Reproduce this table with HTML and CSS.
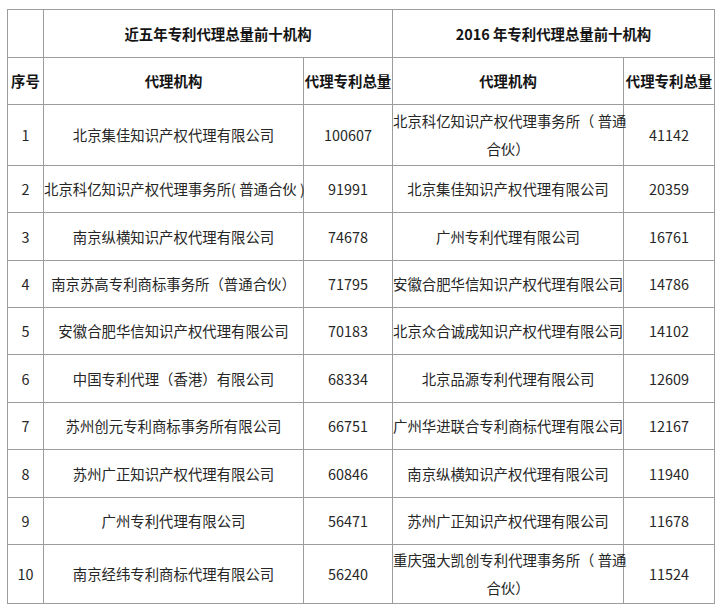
FILE: index.html
```html
<!DOCTYPE html>
<html lang="zh-CN">
<head>
<meta charset="utf-8">
<title>专利代理总量前十机构</title>
<link rel="stylesheet" href="styles.css">
</head>
<body>
<table class="rank">
  <colgroup>
    <col class="c-no">
    <col class="c-org">
    <col class="c-num">
    <col class="c-org2">
    <col class="c-num2">
  </colgroup>
  <thead>
    <tr class="h1">
      <th></th>
      <th colspan="2">近五年专利代理总量前十机构</th>
      <th colspan="2">2016 年专利代理总量前十机构</th>
    </tr>
    <tr class="h2">
      <th>序号</th>
      <th>代理机构</th>
      <th>代理专利总量</th>
      <th>代理机构</th>
      <th>代理专利总量</th>
    </tr>
  </thead>
  <tbody>
    <tr class="r61"><td>1</td><td>北京集佳知识产权代理有限公司</td><td>100607</td><td>北京科亿知识产权代理事务所（ 普通<br>合伙）</td><td>41142</td></tr>
    <tr class="r47"><td>2</td><td>北京科亿知识产权代理事务所( 普通合伙 )</td><td>91991</td><td>北京集佳知识产权代理有限公司</td><td>20359</td></tr>
    <tr class="r48"><td>3</td><td>南京纵横知识产权代理有限公司</td><td>74678</td><td>广州专利代理有限公司</td><td>16761</td></tr>
    <tr class="r47"><td>4</td><td>南京苏高专利商标事务所（普通合伙）</td><td>71795</td><td>安徽合肥华信知识产权代理有限公司</td><td>14786</td></tr>
    <tr class="r47"><td>5</td><td>安徽合肥华信知识产权代理有限公司</td><td>70183</td><td>北京众合诚成知识产权代理有限公司</td><td>14102</td></tr>
    <tr class="r48"><td>6</td><td>中国专利代理（香港）有限公司</td><td>68334</td><td>北京品源专利代理有限公司</td><td>12609</td></tr>
    <tr class="r47"><td>7</td><td>苏州创元专利商标事务所有限公司</td><td>66751</td><td>广州华进联合专利商标代理有限公司</td><td>12167</td></tr>
    <tr class="r48"><td>8</td><td>苏州广正知识产权代理有限公司</td><td>60846</td><td>南京纵横知识产权代理有限公司</td><td>11940</td></tr>
    <tr class="r47"><td>9</td><td>广州专利代理有限公司</td><td>56471</td><td>苏州广正知识产权代理有限公司</td><td>11678</td></tr>
    <tr class="r59"><td>10</td><td>南京经纬专利商标代理有限公司</td><td>56240</td><td>重庆强大凯创专利代理事务所（ 普通<br>合伙）</td><td>11524</td></tr>
  </tbody>
</table>
</body>
</html>
```

FILE: styles.css
```css
html, body {
  margin: 0;
  padding: 0;
  background: #ffffff;
}

body {
  padding: 9px 0 0 7px;
  font-family: "Noto Sans CJK SC", "Noto Sans", sans-serif;
  font-size: 14.4px;
  color: #262626;
}

.rank {
  border-collapse: collapse;
  table-layout: fixed;
  width: 707px;
}

.c-no { width: 36px; }
.c-org { width: 260px; }
.c-num { width: 89px; }
.c-org2 { width: 231px; }
.c-num2 { width: 91px; }

.rank th,
.rank td {
  border: 1px solid #9c9c9c;
  padding: 0;
  text-align: center;
  vertical-align: middle;
  line-height: 28px;
  white-space: nowrap;
  overflow: visible;
}

.rank th {
  font-weight: bold;
  color: #141414;
}

.h1 { height: 48px; }
.h2 { height: 47px; }
.r61 { height: 61px; }
.r47 { height: 47px; }
.r48 { height: 48px; }
.r59 { height: 59px; }
```
